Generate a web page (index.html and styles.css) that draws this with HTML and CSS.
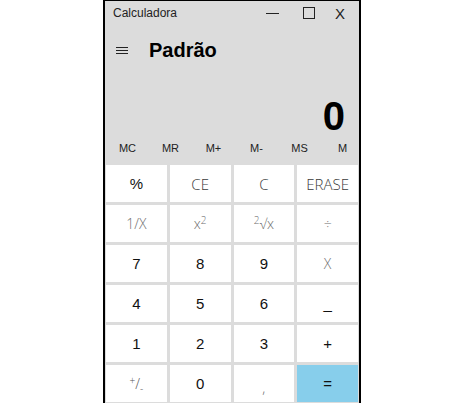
FILE: index.html
```html
<!DOCTYPE html>
<html lang="pt">
<head>
<meta charset="utf-8">
<title>Calculadora</title>
<link rel="stylesheet" href="styles.css">
</head>
<body>
<div class="window">
  <div class="titlebar">
    <span class="app-name">Calculadora</span>
    <div class="controls">
      <span class="ctl"><span class="min-line"></span></span>
      <span class="ctl"><span class="max-box"></span></span>
      <span class="ctl close">X</span>
    </div>
  </div>
  <div class="header">
    <svg class="menu" width="12" height="7" viewBox="0 0 12 7"><path d="M0 0.5H12M0 3.5H12M0 6.5H12" stroke="#222" stroke-width="1"/></svg>
    <span class="mode">Padrão</span>
  </div>
  <div class="display">0</div>
  <div class="memory">
    <span>MC</span><span>MR</span><span>M+</span><span>M-</span><span>MS</span><span>M</span>
  </div>
  <div class="keys">
    <button class="key arial"><span>%</span></button>
    <button class="key soft"><span>CE</span></button>
    <button class="key soft"><span>C</span></button>
    <button class="key soft"><span>ERASE</span></button>
    <button class="key pale"><span>1/X</span></button>
    <button class="key pale"><span>x<sup>2</sup></span></button>
    <button class="key pale"><span><sup>2</sup>√x</span></button>
    <button class="key pale"><span>÷</span></button>
    <button class="key arial"><span>7</span></button>
    <button class="key arial"><span>8</span></button>
    <button class="key arial"><span>9</span></button>
    <button class="key pale"><span>X</span></button>
    <button class="key arial"><span>4</span></button>
    <button class="key arial"><span>5</span></button>
    <button class="key arial"><span>6</span></button>
    <button class="key arial"><span>_</span></button>
    <button class="key arial"><span>1</span></button>
    <button class="key arial"><span>2</span></button>
    <button class="key arial"><span>3</span></button>
    <button class="key arial"><span>+</span></button>
    <button class="key pale sign"><span><sup>+</sup>/<sub>-</sub></span></button>
    <button class="key arial"><span>0</span></button>
    <button class="key pale comma"><span>,</span></button>
    <button class="key arial equals"><span>=</span></button>
  </div>
</div>
</body>
</html>
```

FILE: styles.css
```css
html, body {
  margin: 0;
  padding: 0;
  background: #ffffff;
}

.window {
  margin-left: 103px;
  width: 254px;
  border: 2px solid #000;
  border-top-width: 1px;
  border-bottom: none;
  background: #dcdcdc;
  font-family: "Liberation Sans", Arial, sans-serif;
  color: #111;
  padding-bottom: 1px;
}

.titlebar {
  height: 24px;
  display: flex;
  align-items: center;
  padding-left: 8px;
  padding-right: 2px;
}

.app-name {
  font-size: 12px;
  color: #222;
}

.controls {
  margin-left: auto;
  display: flex;
}

.ctl {
  width: 34px;
  height: 24px;
  display: flex;
  align-items: center;
  justify-content: center;
}

.min-line {
  width: 13px;
  height: 1px;
  background: #222;
}

.max-box {
  width: 10px;
  height: 10px;
  border: 1px solid #222;
  margin-left: 6px;
}

.close {
  font-size: 15px;
  color: #222;
}

.header {
  height: 50px;
  display: flex;
  align-items: center;
  padding-left: 11px;
}

.menu {
  display: block;
}

.mode {
  margin-left: 21px;
  font-size: 20px;
  font-weight: bold;
  color: #000;
}

.display {
  padding-top: 21px;
  height: 40px;
  line-height: 40px;
  font-size: 40px;
  font-weight: bold;
  text-align: right;
  padding-right: 14px;
  color: #000;
}

.memory {
  height: 23px;
  padding-bottom: 6px;
  display: grid;
  grid-template-columns: repeat(6, 43px);
  align-items: center;
  justify-items: center;
  padding-left: 1px;
  font-size: 11px;
  color: #222;
}

.keys {
  display: grid;
  grid-template-columns: repeat(4, 1fr);
  grid-auto-rows: 37px;
  column-gap: 3px;
  row-gap: 3px;
  padding: 0 1px;
}

.key {
  border: none;
  margin: 0;
  padding: 0;
  background: #ffffff;
  font-size: 15px;
  color: #111;
  display: flex;
  align-items: center;
  justify-content: center;
}

.arial {
  font-family: "Liberation Sans", Arial, sans-serif;
}

.soft {
  font-family: "Open Sans", sans-serif;
  font-weight: 300;
  font-size: 15px;
  color: #3a3a3a;
}

.pale {
  font-family: "Open Sans", sans-serif;
  font-weight: 300;
  font-size: 14px;
  color: #6e6e6e;
}

.key sup {
  font-size: 10px;
  vertical-align: 5px;
  line-height: 0;
}

.key sub {
  font-size: 10px;
  vertical-align: -4px;
  line-height: 0;
}

.sign {
  color: #555;
}

.comma span {
  position: relative;
  top: 4px;
}

.equals {
  background: #87ceeb;
}
```
